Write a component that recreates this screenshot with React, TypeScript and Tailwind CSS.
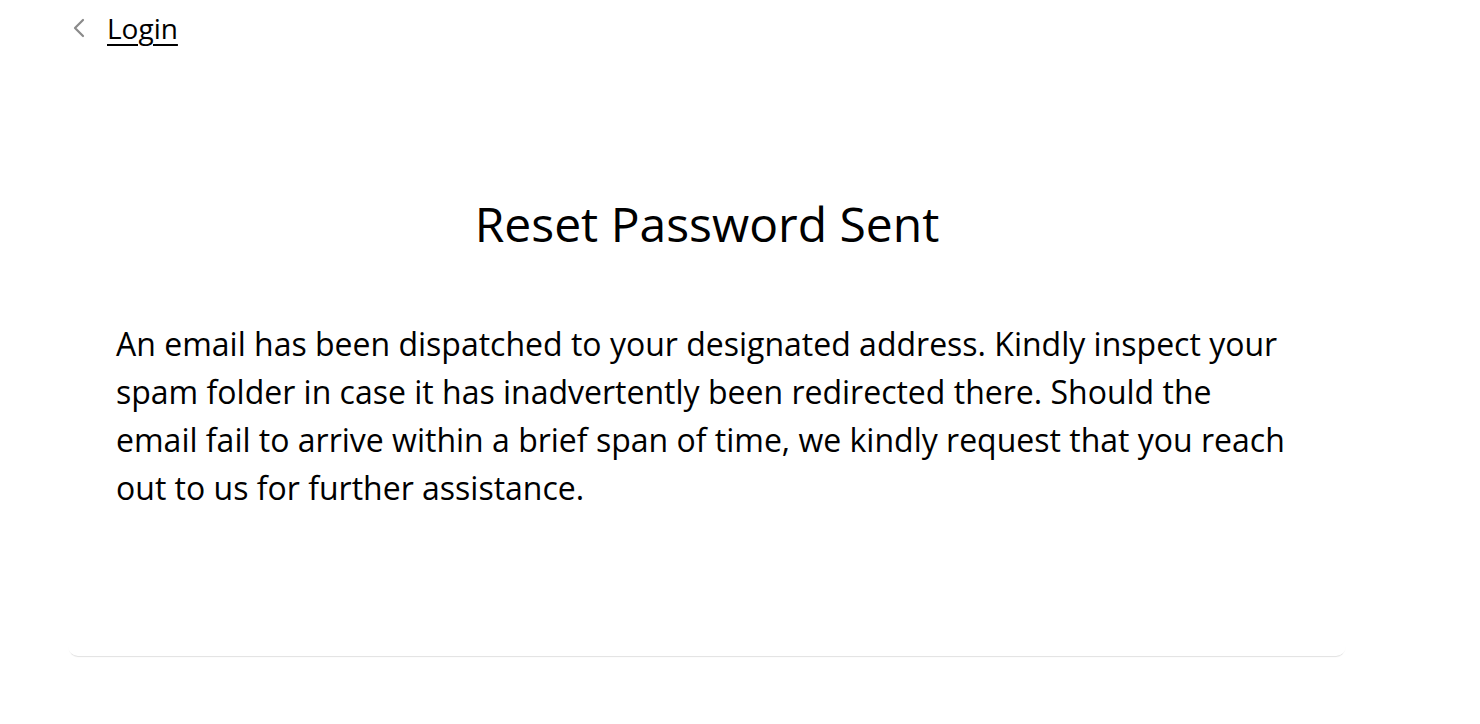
import React from "react";

export default function App() {
  return (
    <div
      className="min-h-[724px] w-[1480px] bg-white text-black"
      style={{ fontFamily: '"Open Sans", "Noto Sans", sans-serif' }}
    >
      <div className="flex flex-col px-[68px] pr-[134px]">
        <div className="flex h-[58px] items-center gap-[20px] pl-[4px]">
          <svg width="15" height="22" viewBox="0 0 15 22" fill="none" className="mt-[-3px]">
            <path d="M11 3 L3 11 L11 19" stroke="#8a8a8a" strokeWidth="2.2" strokeLinecap="round" strokeLinejoin="round" />
          </svg>
          <a href="#" className="text-[28px] leading-none underline underline-offset-[5px] decoration-[2px] text-black mt-[-2px]">
            Login
          </a>
        </div>
        <div className="rounded-b-[10px] bg-white shadow-[0_2px_1px_-1px_rgba(0,0,0,0.12)] px-[48px] pt-[136px] pb-[144px]">
          <h1 className="text-center text-[48px] leading-[60px] font-normal">Reset Password Sent</h1>
          <p className="mt-[66px] max-w-[1176px] text-[32px] leading-[48px]">
            An email has been dispatched to your designated address. Kindly inspect your spam folder in case it has inadvertently been redirected there. Should the email fail to arrive within a brief span of time, we kindly request that you reach out to us for further assistance.
          </p>
        </div>
      </div>
    </div>
  );
}
